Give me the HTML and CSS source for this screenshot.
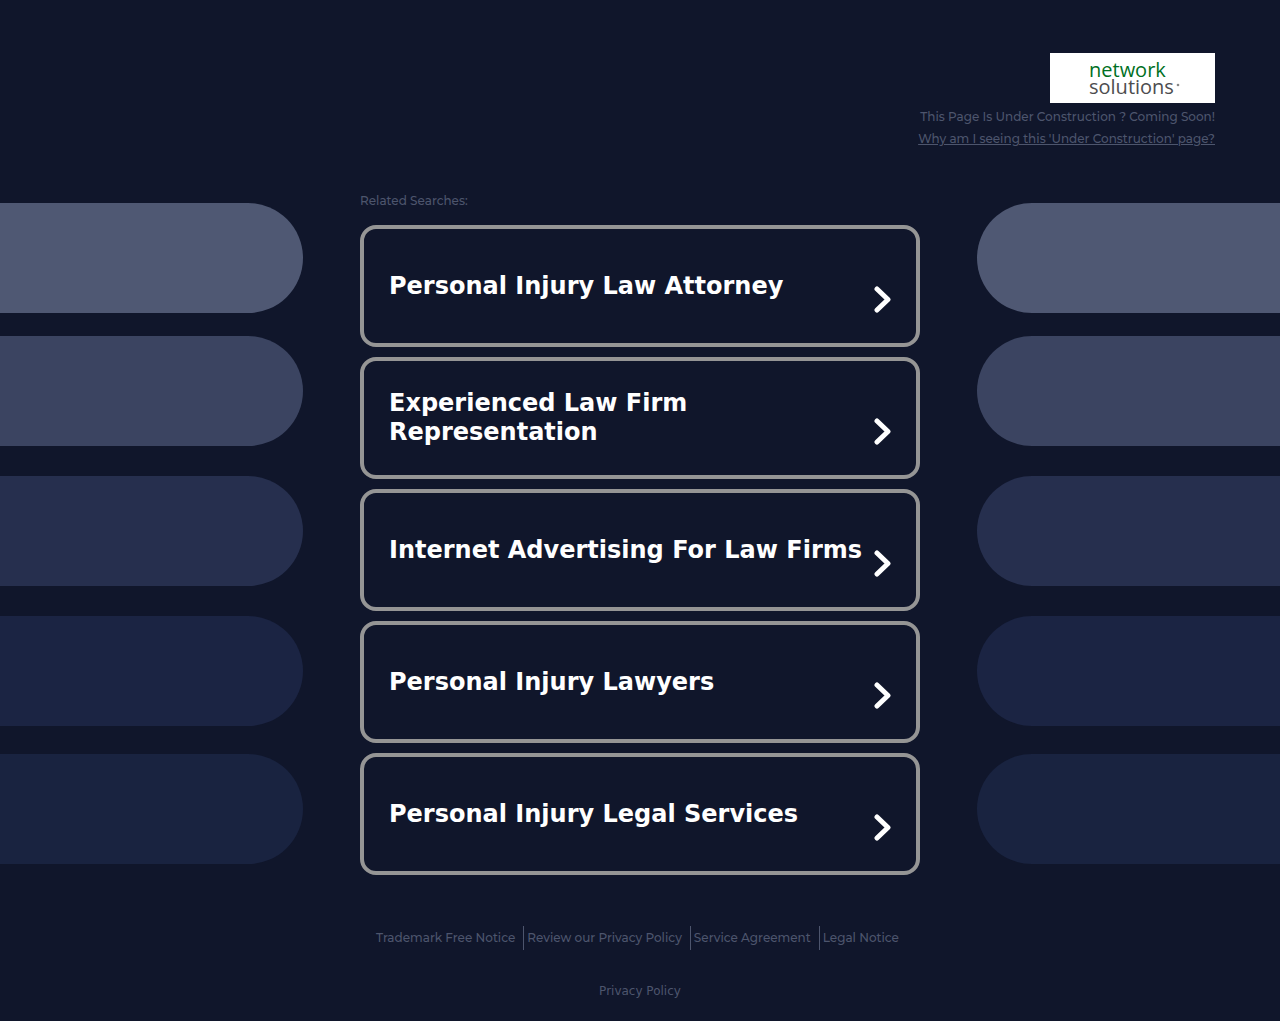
FILE: index.html
```html
<!DOCTYPE html>
<html lang="en">
<head>
    <meta charset="UTF-8" />
    <meta name="viewport" content="width=device-width, initial-scale=1" />
    <title>Under Construction</title>
    <link rel="stylesheet" href="styles.css">
</head>
<body>
    <header class="header">
        <svg class="logo" viewBox="0 0 165 50" role="img" aria-label="network solutions">
            <rect width="165" height="50" fill="#fff" />
            <text class="logo-top" x="39" y="24">network</text>
            <text class="logo-bottom" x="39" y="41">solutions</text>
            <circle cx="128" cy="32" r="1.3" fill="#888" />
        </svg>
        <p>This Page Is Under Construction ? Coming Soon!</p>
        <a href="#">Why am I seeing this 'Under Construction' page?</a>
    </header>

    <div class="content">
        <div class="bars bars-left">
            <div class="bar bar-1"></div>
            <div class="bar bar-2"></div>
            <div class="bar bar-3"></div>
            <div class="bar bar-4"></div>
            <div class="bar bar-5"></div>
        </div>

        <main class="searches">
            <p class="searches-title">Related Searches:</p>
            <a class="card" href="#">
                <span>Personal Injury Law Attorney</span>
                <svg class="chevron" viewBox="0 0 18 28"><path d="M4 3 L15 13.5 L4 24" /></svg>
            </a>
            <a class="card" href="#">
                <span>Experienced Law Firm Representation</span>
                <svg class="chevron" viewBox="0 0 18 28"><path d="M4 3 L15 13.5 L4 24" /></svg>
            </a>
            <a class="card" href="#">
                <span>Internet Advertising For Law Firms</span>
                <svg class="chevron" viewBox="0 0 18 28"><path d="M4 3 L15 13.5 L4 24" /></svg>
            </a>
            <a class="card" href="#">
                <span>Personal Injury Lawyers</span>
                <svg class="chevron" viewBox="0 0 18 28"><path d="M4 3 L15 13.5 L4 24" /></svg>
            </a>
            <a class="card" href="#">
                <span>Personal Injury Legal Services</span>
                <svg class="chevron" viewBox="0 0 18 28"><path d="M4 3 L15 13.5 L4 24" /></svg>
            </a>
        </main>

        <div class="bars bars-right">
            <div class="bar bar-1"></div>
            <div class="bar bar-2"></div>
            <div class="bar bar-3"></div>
            <div class="bar bar-4"></div>
            <div class="bar bar-5"></div>
        </div>
    </div>

    <footer class="footer">
        <nav class="footer-links">
            <a href="#">Trademark Free Notice</a>
            <a href="#">Review our Privacy Policy</a>
            <a href="#">Service Agreement</a>
            <a href="#">Legal Notice</a>
        </nav>
        <a class="privacy" href="#">Privacy Policy</a>
    </footer>
</body>
</html>
```
FILE: styles.css
```css
* {
    box-sizing: border-box;
    margin: 0;
    padding: 0;
}
body {
    background: #10162b;
    color: #4d556d;
    font-family: Montserrat, Inter, sans-serif;
    font-size: 12px;
    font-weight: 500;
    line-height: 22px;
}
a {
    color: inherit;
}

/* header */
.header {
    display: flex;
    flex-direction: column;
    align-items: flex-end;
    padding: 53px 65px 0;
}
.logo {
    width: 165px;
    height: 50px;
    margin-bottom: 3px;
}
.logo text {
    font-family: "Open Sans", "Noto Sans", sans-serif;
    font-size: 20px;
    font-weight: 400;
}
.logo-top {
    fill: #00701f;
}
.logo-bottom {
    fill: #4d4d4f;
}

/* middle part */
.content {
    display: grid;
    grid-template-columns: minmax(0, 1fr) minmax(0, 560px) minmax(0, 1fr);
    column-gap: 57px;
    margin-top: 40px;
}
.bars {
    padding-top: 13px;
}
.bar {
    height: 110px;
}
.bars-left .bar {
    border-radius: 0 55px 55px 0;
}
.bars-right .bar {
    border-radius: 55px 0 0 55px;
}
.bar-1 {
    background: #4f5873;
    margin-bottom: 23px;
}
.bar-2 {
    background: #3b4461;
    margin-bottom: 30px;
}
.bar-3 {
    background: #262f4e;
    margin-bottom: 30px;
}
.bar-4 {
    background: #1b2443;
    margin-bottom: 28px;
}
.bar-5 {
    background: #192340;
}

.searches {
    display: flex;
    flex-direction: column;
    gap: 10px;
}
.searches-title {
    margin-bottom: 3px;
}
.card {
    display: flex;
    align-items: center;
    justify-content: space-between;
    min-height: 122px;
    padding: 0 25px;
    border: 4px solid #959595;
    border-radius: 16px;
    color: #fff;
    font-family: "DejaVu Sans", sans-serif;
    font-size: 24px;
    font-weight: 700;
    line-height: 29px;
    text-decoration: none;
}
.chevron {
    flex: none;
    width: 18px;
    height: 28px;
    margin-top: 27px;
    fill: none;
    stroke: #fff;
    stroke-width: 5;
    stroke-linecap: round;
    stroke-linejoin: round;
}

/* footer */
.footer {
    display: flex;
    flex-direction: column;
    align-items: center;
    gap: 30px;
    padding: 51px 0 19px;
}
.footer a {
    text-decoration: none;
}
.footer-links {
    display: flex;
    flex-wrap: wrap;
    justify-content: center;
    line-height: 24px;
}
.footer-links a {
    padding: 0 8px 0 3px;
    border-right: 1px solid #4d556d;
}
.footer-links a:last-child {
    border-right: none;
}
.privacy {
    font-family: "DejaVu Sans", sans-serif;
    font-weight: 400;
}

@media (max-width: 768px) {
    .content {
        grid-template-columns: 1fr;
        padding: 0 16px;
    }
    .bars {
        display: none;
    }
    .header {
        padding: 24px 16px 0;
    }
}
```
